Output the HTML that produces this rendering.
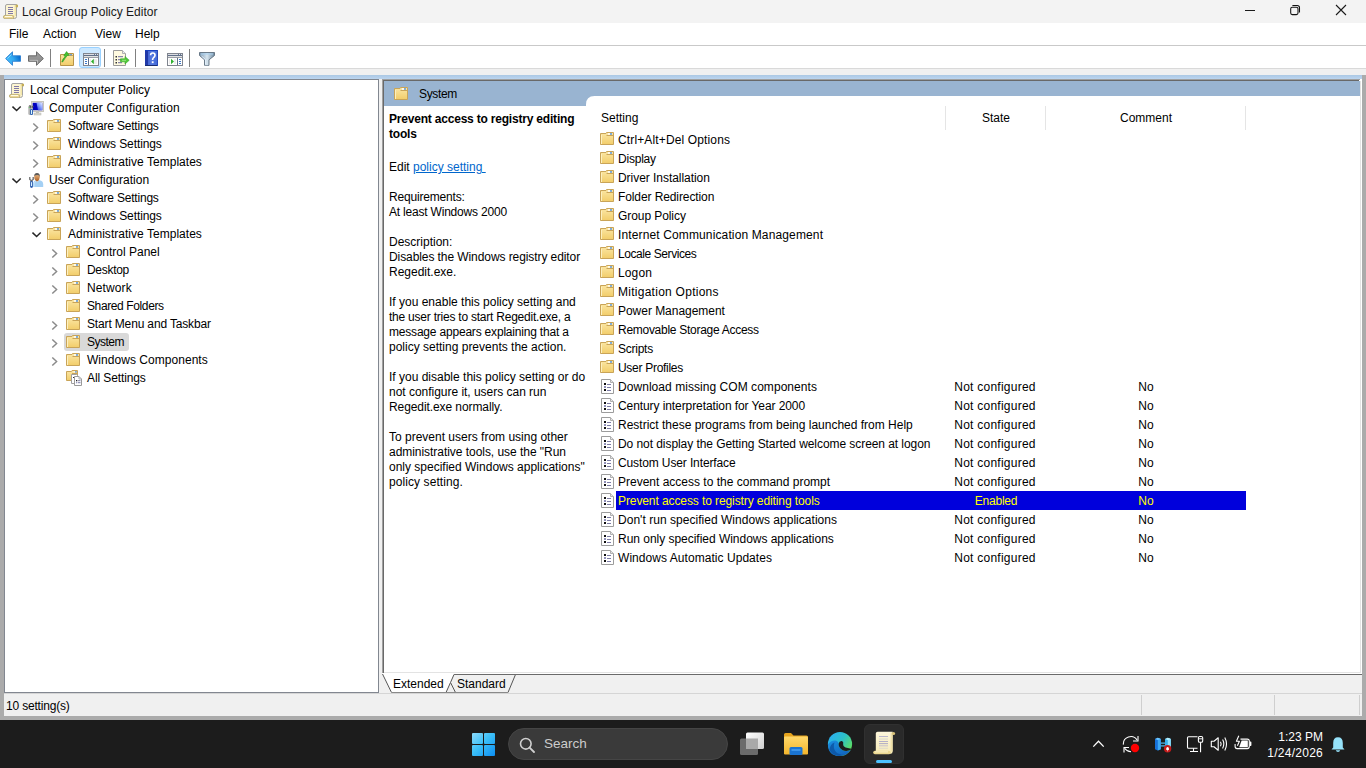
<!DOCTYPE html>
<html><head><meta charset="utf-8"><title>Local Group Policy Editor</title>
<style>
html,body{margin:0;padding:0;width:1366px;height:768px;overflow:hidden;background:#fff}
body{position:relative;font-family:'Liberation Sans', sans-serif}
body>div{position:absolute;box-sizing:content-box}
.t{white-space:pre;line-height:16px;font-family:'Liberation Sans', sans-serif}
svg{overflow:visible}
</style></head><body>
<svg width="0" height="0" style="position:absolute"><defs><linearGradient id="gFold" x1="0" y1="0" x2="0" y2="1"><stop offset="0" stop-color="#fbe7a6"/><stop offset="1" stop-color="#f2cd6a"/></linearGradient>
<symbol id="folder" viewBox="0 0 14 13">
 <path d="M0.5 1.5H6L6.5 0.5H13.5V12.5H0.5Z" fill="url(#gFold)" stroke="#c9a458"/>
 <path d="M6.5 3.5H13" stroke="#c9a458"/>
 <rect x="8" y="1.2" width="2" height="1.5" fill="#fff"/>
 <rect x="10" y="1.2" width="2" height="1.5" fill="#5b9be8"/>
 <path d="M1.5 3v9" stroke="#fdf0c0"/>
</symbol>
<symbol id="page" viewBox="0 0 13 15">
 <path d="M0.5 0.5H9.5L12.5 3.5V14.5H0.5Z" fill="#fff" stroke="#9c9c9c"/>
 <path d="M9.5 0.5V3.5H12.5" fill="#e6e6e6" stroke="#b0b0b0"/>
 <rect x="3" y="4" width="2" height="2" fill="#111"/>
 <rect x="3" y="7" width="2" height="2" fill="#8f8fb8"/>
 <rect x="3" y="10" width="2" height="2" fill="#111"/>
 <rect x="6" y="5" width="4" height="1" fill="#7c7ca6"/>
 <rect x="6" y="8" width="4" height="1" fill="#7c7ca6"/>
 <rect x="6" y="11" width="4" height="1" fill="#7c7ca6"/>
</symbol>
<symbol id="scroll" viewBox="0 0 16 16">
 <path d="M3.5 12.5V3Q3.5 1.5 5 1.5H14.5V13.5Q14.5 15.5 12.5 15.5H11" fill="#fdf5d2" stroke="#a4a4a4"/>
 <rect x="12.5" y="2" width="1.5" height="11" fill="#f3e6a8"/>
 <circle cx="15" cy="3" r="1.4" fill="#c4ac58"/>
 <rect x="6" y="4" width="5" height="1" fill="#8078a8"/>
 <rect x="6" y="6" width="5" height="1" fill="#8078a8"/>
 <rect x="6" y="8" width="5" height="1" fill="#8078a8"/>
 <rect x="6" y="10" width="5" height="1" fill="#8078a8"/>
 <rect x="1.4" y="12.4" width="10.5" height="3.2" rx="1.6" fill="#eed894" stroke="#b6a66a" stroke-width="0.8"/>
 <rect x="3" y="13" width="7" height="1" fill="#fffbe6"/>
</symbol>
<symbol id="scroll_big" viewBox="0 0 24 24">
 <linearGradient id="gPap" x1="0" y1="0" x2="0" y2="1"><stop offset="0" stop-color="#fdf6dc"/><stop offset="1" stop-color="#f6eab8"/></linearGradient>
 <path d="M3.8 21V2.6Q3.8 0.8 5.6 0.8H20.6V20.5Q20.6 22.8 18.6 22.8" fill="url(#gPap)"/>
 <rect x="18.6" y="1.5" width="2" height="19" fill="#efe0a8"/>
 <circle cx="21.6" cy="2.6" r="1.5" fill="#dcc478"/>
 <rect x="7" y="5" width="9" height="0.9" fill="#b4b0cc"/>
 <rect x="7" y="7.6" width="9" height="0.9" fill="#d8d4d0"/>
 <rect x="7" y="10" width="9" height="0.9" fill="#aca8c8"/>
 <rect x="7" y="12.2" width="9" height="0.9" fill="#a8a4c4"/>
 <rect x="7" y="14.4" width="9" height="0.9" fill="#c0bcd0"/>
 <rect x="7" y="16.8" width="9" height="0.9" fill="#dcd8cc"/>
 <rect x="1.2" y="19.8" width="17.6" height="3.4" rx="1.7" fill="#ecd890"/>
 <rect x="3" y="20.4" width="13" height="1" fill="#fbf2cc"/>
</symbol>
<linearGradient id="gScr" x1="0" y1="1" x2="1" y2="0"><stop offset="0" stop-color="#2030e0"/><stop offset="0.6" stop-color="#90a8ff"/><stop offset="1" stop-color="#e8f0ff"/></linearGradient>
<symbol id="computer" viewBox="0 0 16 16">
 <rect x="3.5" y="1.5" width="12" height="10" fill="#e8e6dc" stroke="#c8c6bc"/>
 <rect x="4.7" y="2.8" width="9.6" height="7.4" fill="#0000c0"/>
 <path d="M8.5 2.8H14.3V10.2H10Z" fill="url(#gScr)"/>
 <rect x="8" y="11.5" width="3" height="1.6" fill="#c4c4bc"/>
 <rect x="6" y="13" width="7" height="2" fill="#d8d8d0" stroke="#b8b8b0" stroke-width="0.5"/>
 <rect x="0.3" y="5.2" width="4.5" height="9.8" rx="1.5" fill="#b4b4b4"/>
 <rect x="2" y="9" width="3" height="6" rx="1.3" fill="#3568b8"/>
 <rect x="3" y="10" width="1" height="4" fill="#d8f4ff"/>
 <path d="M1.6 5.4L3.4 8.2L5.3 5.8" stroke="#5a5a5a" stroke-width="1.3" fill="none"/>
 <rect x="3" y="7.6" width="1" height="1" fill="#fff"/>
 <rect x="0.8" y="7" width="1" height="1" fill="#60c060"/>
</symbol>
<linearGradient id="gFace" x1="0" y1="0" x2="0" y2="1"><stop offset="0" stop-color="#f2c08a"/><stop offset="1" stop-color="#a85a20"/></linearGradient>
<symbol id="user" viewBox="0 0 16 16">
 <path d="M5.2 15V11.8Q5.2 8.2 9 8.2H11.5Q15.2 8.8 15.2 12.2V15Z" fill="#a4d0f4"/>
 <path d="M6.2 15V12Q6.2 9.5 8.5 9.2" fill="none" stroke="#c8e6fc" stroke-width="0.8"/>
 <path d="M8.8 8.4L9.6 10.3L10.6 8.4Z" fill="#fff"/>
 <path d="M6.2 5Q6.2 1.5 9 1.5Q11.8 1.5 11.8 5Q11.8 8 9.2 9.5Q6.2 8 6.2 5Z" fill="url(#gFace)"/>
 <path d="M6.1 4.5Q6.1 1 9 1Q12 1 11.9 5.2L11.2 3.4Q9.5 2.6 6.8 3.4Z" fill="#5a5a5a"/>
 <path d="M3.5 9.8L3.5 14.5" stroke="#2f5fb0" stroke-width="2.8" stroke-linecap="round"/>
 <rect x="3" y="10.2" width="1" height="3.8" fill="#d8f4ff"/>
 <path d="M1.8 5V7.5L3.5 8.8L5.2 7.5V5" stroke="#6a6a6a" stroke-width="1.3" fill="none"/>
</symbol>
<symbol id="allset" viewBox="0 0 16 16">
 <path d="M0.5 1.5H5.5L6 0.5H11.5V10.5H0.5Z" fill="url(#gFold)" stroke="#c9a458"/>
 <path d="M6 3.5H11" stroke="#c9a458"/>
 <rect x="7.5" y="1.3" width="1.5" height="1.2" fill="#fff"/>
 <rect x="9" y="1.3" width="1.8" height="1.2" fill="#4a8ee0"/>
 <path d="M5.5 4.5H10.5L11.5 5.5V13.5H5.5Z" fill="#fff" stroke="#a0a0a0"/>
 <rect x="7" y="7" width="1" height="1" fill="#333"/>
 <path d="M8.5 6.5H13L15.5 9V15.5H8.5Z" fill="#fff" stroke="#9a9a9a"/>
 <path d="M13 6.5V9H15.5" fill="none" stroke="#b0b0b0"/>
 <rect x="10" y="10" width="1.3" height="1.3" fill="#222"/>
 <rect x="10" y="12" width="1.3" height="1.3" fill="#9a9ac0"/>
 <rect x="12" y="10.2" width="2.5" height="1" fill="#7c7ca6"/>
 <rect x="12" y="12.2" width="2.5" height="1" fill="#7c7ca6"/>
</symbol>
<symbol id="chev_r" viewBox="0 0 8 9">
 <path d="M1.3 0.5L5.6 4.5L1.3 8.5" fill="none" stroke="#8a8a8a" stroke-width="1.45"/>
</symbol>
<symbol id="chev_d" viewBox="0 0 10 7">
 <path d="M0.5 0.6L4.6 4.6L8.7 0.6" fill="none" stroke="#262626" stroke-width="1.45"/>
</symbol>
<linearGradient id="gBack" x1="0" y1="0.7" x2="1" y2="0.3"><stop offset="0" stop-color="#48c0ff"/><stop offset="0.5" stop-color="#30a8f0"/><stop offset="1" stop-color="#0060c8"/></linearGradient>
<symbol id="tb_back" viewBox="0 0 16 16">
 <path d="M0.6 7.5L7.5 0.8V4.8H15.5V10.3H7.5V14.3Z" fill="url(#gBack)" stroke="#2e7fd0" stroke-width="0.9"/>
 <path d="M2.5 7.5L6.5 3.5" stroke="#a8e4ff" stroke-width="0.7"/>
</symbol>
<linearGradient id="gFwd" x1="0" y1="0" x2="0" y2="1"><stop offset="0" stop-color="#a0a0a0"/><stop offset="1" stop-color="#888888"/></linearGradient>
<symbol id="tb_fwd" viewBox="0 0 16 16">
 <path d="M15.4 7.5L8.5 0.8V4.8H0.5V10.3H8.5V14.3Z" fill="url(#gFwd)" stroke="#606060" stroke-width="0.9"/>
 <path d="M1.5 9.3H9.5V12.5" stroke="#d8d8d8" stroke-width="0.6" fill="none"/>
</symbol>
<symbol id="tb_up" viewBox="0 0 16 16">
 <path d="M1.5 4.5H6.5L7 3.5H14.5V15.5H1.5Z" fill="url(#gFold)" stroke="#b89448"/>
 <path d="M7 5.5H14" stroke="#c9a458"/>
 <rect x="10.5" y="4.2" width="2.5" height="1.1" fill="#4a8ee0"/>
 <path d="M2.8 12Q3.8 8.5 6.2 6.6L4.8 5.6L7.6 1.6L10.2 5.2L8.2 5.6Q6.2 8 3.6 12Z" fill="#45c030" stroke="#2a9a20" stroke-width="0.6"/>
</symbol>
<symbol id="tb_tree" viewBox="0 0 16 13">
 <rect x="0" y="0" width="16" height="13" fill="#80858f"/>
 <rect x="1" y="1" width="10" height="1" fill="#dcdde2"/>
 <rect x="11" y="1" width="4" height="1" fill="#6b7a92"/>
 <rect x="12" y="1" width="1" height="1" fill="#e0e4ea"/>
 <rect x="14" y="1" width="1" height="1" fill="#e0e4ea"/>
 <rect x="1" y="2" width="14" height="1" fill="#5f6f88"/>
 <rect x="1" y="3" width="14" height="1" fill="#e2e2e2"/>
 <rect x="1" y="4" width="14" height="1" fill="#9a9ea6"/>
 <rect x="1" y="5" width="4" height="7" fill="#fff"/>
 <rect x="5" y="5" width="1" height="7" fill="#5f6f88"/>
 <rect x="6" y="5" width="9" height="7" fill="#fff"/>
 <rect x="7" y="6" width="1" height="5" fill="#ececec"/>
 <rect x="11" y="6" width="3" height="5" fill="#ececec"/>
 <rect x="2" y="6" width="2" height="1" fill="#3b78c8"/>
 <rect x="2" y="8" width="2" height="1" fill="#3b78c8"/>
 <rect x="2" y="10" width="2" height="1" fill="#3b78c8"/>
 <path d="M10.8 5.8V11.2L8 8.5Z" fill="#30b030"/>
</symbol>
<symbol id="tb_export" viewBox="0 0 17 16">
 <path d="M0.5 0.5H9.5L12.5 3.5V15.5H0.5Z" fill="#fffae0" stroke="#9a9a9a"/>
 <path d="M9.5 0.5V3.5H12.5" fill="#eee" stroke="#b0b0b0"/>
 <rect x="2.5" y="6" width="1.5" height="1.5" fill="#333"/><rect x="2.5" y="9" width="1.5" height="1.5" fill="#333"/><rect x="2.5" y="12" width="1.5" height="1.5" fill="#333"/>
 <rect x="5" y="6.2" width="5" height="1" fill="#6a6aa0"/><rect x="5" y="9.2" width="4" height="1" fill="#6a6aa0"/><rect x="5" y="12.2" width="4" height="1" fill="#6a6aa0"/>
 <path d="M7.5 8.8H12V6.5L16.2 10.3L12 14V11.8H7.5Z" fill="#50c838" stroke="#38a828" stroke-width="0.6"/>
 <path d="M9 10.3H13" stroke="#a8f090" stroke-width="0.8"/>
</symbol>
<linearGradient id="gHelp" x1="0" y1="0" x2="1" y2="0"><stop offset="0" stop-color="#3a58c8"/><stop offset="0.5" stop-color="#5478e0"/><stop offset="1" stop-color="#4068d8"/></linearGradient>
<symbol id="tb_help" viewBox="0 0 13 16">
 <rect x="0" y="0" width="13" height="16" fill="url(#gHelp)"/>
 <rect x="0" y="0" width="3" height="16" fill="#2038a8"/>
 <rect x="0" y="0" width="13" height="1" fill="#1840c0"/>
 <rect x="0" y="15" width="13" height="1" fill="#182c70"/>
 <rect x="12" y="0" width="1" height="16" fill="#2848b8"/>
 <path d="M5.6 5.2Q5.6 3 7.8 3Q10 3 10 5.2Q10 6.8 8.4 7.8Q7.6 8.4 7.6 10" fill="none" stroke="#fff" stroke-width="1.6"/>
 <rect x="6.8" y="11.3" width="1.8" height="1.8" fill="#fff"/>
</symbol>
<symbol id="tb_action" viewBox="0 0 16 13">
 <rect x="0" y="0" width="16" height="13" fill="#80858f"/>
 <rect x="1" y="1" width="10" height="1" fill="#dcdde2"/>
 <rect x="11" y="1" width="4" height="1" fill="#6b7a92"/>
 <rect x="12" y="1" width="1" height="1" fill="#e0e4ea"/>
 <rect x="14" y="1" width="1" height="1" fill="#e0e4ea"/>
 <rect x="1" y="2" width="14" height="1" fill="#5f6f88"/>
 <rect x="1" y="3" width="14" height="1" fill="#e2e2e2"/>
 <rect x="1" y="4" width="14" height="1" fill="#9a9ea6"/>
 <rect x="1" y="5" width="9" height="7" fill="#fff"/>
 <rect x="10" y="5" width="1" height="7" fill="#5f6f88"/>
 <rect x="11" y="5" width="4" height="7" fill="#fff"/>
 <rect x="2" y="6" width="1" height="5" fill="#ececec"/>
 <rect x="7" y="6" width="2" height="5" fill="#ececec"/>
 <rect x="12" y="6" width="2" height="1" fill="#3b78c8"/>
 <rect x="12" y="8" width="2" height="1" fill="#3b78c8"/>
 <rect x="12" y="10" width="2" height="1" fill="#3b78c8"/>
 <path d="M4 5.8V11.2L7 8.5Z" fill="#30b030"/>
</symbol>
<linearGradient id="gFil" x1="0" y1="0" x2="1" y2="0"><stop offset="0" stop-color="#7c98b0"/><stop offset="0.5" stop-color="#d8e6f0"/><stop offset="1" stop-color="#6c889e"/></linearGradient>
<symbol id="tb_filter" viewBox="0 0 16 14">
 <path d="M0.5 0.5H15.5V3.5L10 7.8V13Q10 13.8 9 13.8H6.5Q5.5 13.8 5.5 13V7.8L0.5 3.5Z" fill="url(#gFil)" stroke="#5e6e7e" stroke-width="0.9"/>
 <rect x="2" y="1.5" width="12" height="1" fill="#a8d0f0"/>
 <path d="M2.5 4L6.5 7.5V12.5" stroke="#e8f4ff" stroke-width="0.8" fill="none"/>
</symbol>
<linearGradient id="gWin" gradientUnits="userSpaceOnUse" x1="0" y1="0" x2="23" y2="23"><stop offset="0" stop-color="#8cdafb"/><stop offset="0.45" stop-color="#3cc0f8"/><stop offset="1" stop-color="#0c8ef2"/></linearGradient>
<symbol id="winlogo" viewBox="0 0 23 23">
 <rect x="0" y="0" width="11" height="11" rx="1" fill="url(#gWin)"/>
 <rect x="12" y="0" width="11" height="11" rx="1" fill="url(#gWin)"/>
 <rect x="0" y="12" width="11" height="11" rx="1" fill="url(#gWin)"/>
 <rect x="12" y="12" width="11" height="11" rx="1" fill="url(#gWin)"/>
</symbol>
<symbol id="tk_search" viewBox="0 0 16 16">
 <circle cx="6.8" cy="6.8" r="5.3" fill="none" stroke="#d0d0d0" stroke-width="1.6"/>
 <path d="M10.6 10.6L15 15" stroke="#d0d0d0" stroke-width="1.8" stroke-linecap="round"/>
</symbol>
<linearGradient id="gTv" x1="0" y1="0" x2="1" y2="1"><stop offset="0" stop-color="#ffffff"/><stop offset="1" stop-color="#cfcfcf"/></linearGradient>
<symbol id="tk_taskview" viewBox="0 0 26 24">
 <rect x="1" y="6.5" width="18" height="16.5" rx="1.5" fill="#6b6b6b"/>
 <rect x="7" y="0.5" width="18" height="16.5" rx="1.5" fill="url(#gTv)"/>
 <rect x="7" y="6.5" width="12" height="10.5" fill="#a9a9a9"/>
</symbol>
<linearGradient id="gExp" x1="0" y1="0" x2="0" y2="1"><stop offset="0" stop-color="#ffd86a"/><stop offset="1" stop-color="#f3b52c"/></linearGradient>
<symbol id="tk_explorer" viewBox="0 0 26 24">
 <path d="M1 2.5Q1 1 2.5 1H8L10.5 3.5H23.5Q25 3.5 25 5V22H1Z" fill="#e6a31c"/>
 <rect x="1" y="4.5" width="24" height="18" rx="1" fill="url(#gExp)"/>
 <rect x="6.5" y="15" width="13" height="8" rx="1.5" fill="#1a74d2"/>
 <rect x="8.5" y="17" width="9" height="2" fill="#3d95ea"/>
</symbol>
<linearGradient id="gEdge1" x1="0.1" y1="0.1" x2="0.95" y2="0.7"><stop offset="0" stop-color="#2ab0f0"/><stop offset="0.5" stop-color="#2cc0c8"/><stop offset="1" stop-color="#5ee060"/></linearGradient>
<linearGradient id="gEdge2" x1="0" y1="0" x2="0.6" y2="1"><stop offset="0" stop-color="#1a90e0"/><stop offset="1" stop-color="#1266c0"/></linearGradient>
<symbol id="tk_edge" viewBox="0 0 26 26">
 <circle cx="13" cy="13" r="12.1" fill="url(#gEdge1)"/>
 <path d="M0.9 13.5Q1.2 25 13 25.1Q20 25 23.8 18.8Q19.5 20.8 15.8 19.2Q11.6 17.2 11.6 13.2Q11.6 9.8 8.5 9.4Q3.5 9.2 0.9 13.5Z" fill="url(#gEdge2)"/>
 <path d="M2.5 19Q3 13 7.5 11.5Q5.5 17 9 21Q12 24 17.5 23.8Q14 25.3 10 24.6Q5 23.5 2.5 19Z" fill="#0b4f9c" opacity="0.75"/>
 <path d="M11.6 12.8Q12.2 9.9 14.8 10.1Q16.8 10.5 16.2 12.8Q15.8 15.3 18.6 16.6Q21.2 17.6 24 17.4L23.8 18.8Q19.5 20.8 15.8 19.2Q11.6 17.2 11.6 12.8Z" fill="#1c1c1c"/>
</symbol>
<symbol id="tk_chev" viewBox="0 0 13 9">
 <path d="M1.3 7.6L6.5 2.3L11.7 7.6" fill="none" stroke="#fff" stroke-width="1.3"/>
</symbol>
<symbol id="tk_sync" viewBox="0 0 20 19">
 <path d="M2.4 9.6A7.4 7.4 0 0 1 16 5" fill="none" stroke="#fff" stroke-width="1.1"/>
 <path d="M17 1V6H12" fill="none" stroke="#fff" stroke-width="1.1"/>
 <path d="M3.6 13.2Q6 16.6 10 16.8" fill="none" stroke="#fff" stroke-width="1.1"/>
 <path d="M3 17.5V12.5H8" fill="none" stroke="#fff" stroke-width="1.1"/>
 <circle cx="14" cy="13" r="4.2" fill="#ff0000"/>
</symbol>
<linearGradient id="gNet" x1="0" y1="0" x2="1" y2="0"><stop offset="0" stop-color="#2e8fe6"/><stop offset="1" stop-color="#8ad8f8"/></linearGradient>
<symbol id="tk_net" viewBox="0 0 18 16">
 <path d="M1 2L3.8 0.8L6.8 2V12.2L3.8 13.4L1 12.2Z" fill="#1670d8"/>
 <path d="M3.8 0.8L6.8 2V12.2L3.8 13.4Z" fill="#3ea8f4"/>
 <path d="M1 2L3.8 0.8L6.8 2L3.8 3Z" fill="#70c8ff"/>
 <path d="M11 2L13.8 0.8L16.8 2V12.2L13.8 13.4L11 12.2Z" fill="#3cb0ec"/>
 <path d="M13.8 0.8L16.8 2V12.2L13.8 13.4Z" fill="#8ee0fc"/>
 <path d="M11 2L13.8 0.8L16.8 2L13.8 3Z" fill="#b8f0ff"/>
 <rect x="6.8" y="5.5" width="4.2" height="1.2" fill="#50b8f0"/>
 <rect x="6.8" y="8.3" width="4.2" height="1.2" fill="#50b8f0"/>
 <circle cx="13.6" cy="11.8" r="3.7" fill="#c41a1a"/>
 <path d="M12.3 13.1V11.6Q12.3 10.1 13.6 10.1Q14.9 10.1 14.9 11.6V13.1Z" fill="#fff"/>
 <rect x="13.1" y="13.4" width="1" height="0.8" fill="#fff"/>
</symbol>
<symbol id="tk_mon" viewBox="0 0 18 18">
 <path d="M11.5 1.8H2.5Q1.5 1.8 1.5 2.8V12.2Q1.5 13.2 2.5 13.2H11.5" fill="none" stroke="#fff" stroke-width="1.1"/>
 <path d="M4 16.5H12M7.5 13.2V16.5" stroke="#fff" stroke-width="1.1"/>
 <rect x="12.4" y="1.5" width="4.3" height="5.8" rx="1.3" fill="none" stroke="#fff" stroke-width="1.1"/>
 <path d="M12.6 3.8H16.5" stroke="#fff" stroke-width="0.9"/>
 <path d="M14.55 7.3V17.2" stroke="#fff" stroke-width="1.1"/>
</symbol>
<symbol id="tk_vol" viewBox="0 0 18 16">
 <path d="M1.3 5.2H4L8.2 1.8V14.2L4 10.8H1.3Z" fill="none" stroke="#fff" stroke-width="1.1" stroke-linejoin="round"/>
 <path d="M10.5 5.8Q11.8 8 10.5 10.2" fill="none" stroke="#fff" stroke-width="1.1"/>
 <path d="M12.6 3.6Q15 8 12.6 12.4" fill="none" stroke="#fff" stroke-width="1.1"/>
 <path d="M14.8 1.5Q18.2 8 14.8 14.5" fill="none" stroke="#fff" stroke-width="1.1"/>
</symbol>
<symbol id="tk_bat" viewBox="0 0 18 16">
 <path d="M6.5 4.1H13.3Q15.3 4.1 15.3 6.1V11.6Q15.3 13.6 13.3 13.6H3.1Q1.1 13.6 1.1 11.6V9" fill="none" stroke="#fff" stroke-width="1.1"/>
 <path d="M15.8 6.6H16.6Q17.4 6.6 17.4 7.4V10.3Q17.4 11.1 16.6 11.1H15.8Z" fill="#fff"/>
 <path d="M4.8 0.8L2.4 6.2H5.4L3.4 10.8" fill="none" stroke="#fff" stroke-width="1.1" stroke-linejoin="round"/>
 <path d="M5.2 12.3L7.6 5.6H13.8V12.3Z" fill="#fff"/>
</symbol>
<symbol id="tk_bell" viewBox="0 0 16 17">
 <path d="M3.2 11.5V7Q3.2 1.2 8 1.2Q12.8 1.2 12.8 7V11.5L14.5 13.5H1.5Z" fill="#96e2fa"/>
 <path d="M5.8 14.2H10.2Q9.8 16 8 16Q6.2 16 5.8 14.2Z" fill="#96e2fa"/>
</symbol>
</defs></svg>
<div style="left:0px;top:0px;width:1366px;height:23px;background:#f3f3f3;"></div>
<svg style="position:absolute;left:2px;top:3px" width="16" height="16"><use href="#scroll"/></svg>
<div class="t" style="left:22px;top:4px;font-size:12px;color:#1a1a1a;">Local Group Policy Editor</div>
<svg style="position:absolute;left:1240px;top:0px" width="126" height="23" viewBox="0 0 126 23"><line x1="5" y1="10.5" x2="15" y2="10.5" stroke="#1a1a1a" stroke-width="1"/><rect x="50.7" y="7.2" width="7.3" height="7.4" rx="1.6" fill="none" stroke="#111" stroke-width="1.05"/><path d="M52.4 5.4H57.2A2.3 2.3 0 0 1 59.5 7.7V12.6" fill="none" stroke="#111" stroke-width="1.05"/><path d="M96 5L106 15M106 5L96 15" stroke="#1a1a1a" stroke-width="1.1"/></svg>
<div style="left:0px;top:23px;width:1366px;height:22px;background:#ffffff;"></div>
<div style="left:0px;top:45px;width:1366px;height:1px;background:#c9c9c9;"></div>
<div class="t" style="left:9px;top:26px;font-size:12px;color:#000;">File</div>
<div class="t" style="left:43px;top:26px;font-size:12px;color:#000;">Action</div>
<div class="t" style="left:95px;top:26px;font-size:12px;color:#000;">View</div>
<div class="t" style="left:135px;top:26px;font-size:12px;color:#000;">Help</div>
<div style="left:0px;top:46px;width:1366px;height:22px;background:#ffffff;"></div>
<div style="left:0px;top:68px;width:1366px;height:1px;background:#d9d9d9;"></div>
<div style="left:0px;top:69px;width:1366px;height:6px;background:#f0f0f0;"></div>
<div style="left:79px;top:47px;width:20px;height:19px;background:#cce8ff;border:1px solid #99d1ff;border-radius:3px"></div>
<div style="left:50px;top:49px;width:1px;height:18px;background:#808080;"></div>
<div style="left:104px;top:49px;width:1px;height:18px;background:#808080;"></div>
<div style="left:135px;top:49px;width:1px;height:18px;background:#808080;"></div>
<div style="left:189px;top:49px;width:1px;height:18px;background:#808080;"></div>
<svg style="position:absolute;left:5px;top:51px" width="16" height="16"><use href="#tb_back"/></svg>
<svg style="position:absolute;left:28px;top:51px" width="16" height="16"><use href="#tb_fwd"/></svg>
<svg style="position:absolute;left:59px;top:50px" width="16" height="16"><use href="#tb_up"/></svg>
<svg style="position:absolute;left:83px;top:53px" width="16" height="13"><use href="#tb_tree"/></svg>
<svg style="position:absolute;left:113px;top:50px" width="17" height="16"><use href="#tb_export"/></svg>
<svg style="position:absolute;left:145px;top:50px" width="13" height="16"><use href="#tb_help"/></svg>
<svg style="position:absolute;left:167px;top:53px" width="16" height="13"><use href="#tb_action"/></svg>
<svg style="position:absolute;left:199px;top:52px" width="16" height="14"><use href="#tb_filter"/></svg>
<div style="left:0px;top:75px;width:4px;height:645px;background:#ababab;"></div>
<div style="left:1362px;top:75px;width:4px;height:645px;background:#ababab;"></div>
<div style="left:0px;top:716px;width:1366px;height:4px;background:#ababab;"></div>
<div style="left:4px;top:75px;width:1358px;height:4px;background:linear-gradient(#abc8e4,#bcd5ef);"></div>
<div style="left:4px;top:79px;width:373px;height:612px;background:#fff;border:1px solid #828790"></div>
<div style="left:379px;top:79px;width:3px;height:614px;background:#f0f0f0;"></div>
<div style="left:64px;top:333px;width:65px;height:18px;background:#d9d9d9;border-radius:3px"></div>
<svg style="position:absolute;left:8px;top:82px" width="16" height="16"><use href="#scroll"/></svg>
<div class="t" style="left:30px;top:82px;font-size:12px;color:#000;">Local Computer Policy</div>
<svg style="position:absolute;left:12px;top:106px" width="10" height="7"><use href="#chev_d"/></svg>
<svg style="position:absolute;left:28px;top:100px" width="16" height="16"><use href="#computer"/></svg>
<div class="t" style="left:49px;top:100px;font-size:12px;color:#000;letter-spacing:0.157px;">Computer Configuration</div>
<svg style="position:absolute;left:32px;top:123px" width="8" height="9"><use href="#chev_r"/></svg>
<svg style="position:absolute;left:47px;top:119px" width="14" height="13"><use href="#folder"/></svg>
<div class="t" style="left:68px;top:118px;font-size:12px;color:#000;letter-spacing:-0.200px;">Software Settings</div>
<svg style="position:absolute;left:32px;top:141px" width="8" height="9"><use href="#chev_r"/></svg>
<svg style="position:absolute;left:47px;top:137px" width="14" height="13"><use href="#folder"/></svg>
<div class="t" style="left:68px;top:136px;font-size:12px;color:#000;letter-spacing:-0.100px;">Windows Settings</div>
<svg style="position:absolute;left:32px;top:159px" width="8" height="9"><use href="#chev_r"/></svg>
<svg style="position:absolute;left:47px;top:155px" width="14" height="13"><use href="#folder"/></svg>
<div class="t" style="left:68px;top:154px;font-size:12px;color:#000;letter-spacing:0.030px;">Administrative Templates</div>
<svg style="position:absolute;left:12px;top:178px" width="10" height="7"><use href="#chev_d"/></svg>
<svg style="position:absolute;left:28px;top:172px" width="16" height="16"><use href="#user"/></svg>
<div class="t" style="left:49px;top:172px;font-size:12px;color:#000;">User Configuration</div>
<svg style="position:absolute;left:32px;top:195px" width="8" height="9"><use href="#chev_r"/></svg>
<svg style="position:absolute;left:47px;top:191px" width="14" height="13"><use href="#folder"/></svg>
<div class="t" style="left:68px;top:190px;font-size:12px;color:#000;letter-spacing:-0.200px;">Software Settings</div>
<svg style="position:absolute;left:32px;top:213px" width="8" height="9"><use href="#chev_r"/></svg>
<svg style="position:absolute;left:47px;top:209px" width="14" height="13"><use href="#folder"/></svg>
<div class="t" style="left:68px;top:208px;font-size:12px;color:#000;letter-spacing:-0.100px;">Windows Settings</div>
<svg style="position:absolute;left:32px;top:232px" width="10" height="7"><use href="#chev_d"/></svg>
<svg style="position:absolute;left:47px;top:227px" width="14" height="13"><use href="#folder"/></svg>
<div class="t" style="left:68px;top:226px;font-size:12px;color:#000;letter-spacing:0.030px;">Administrative Templates</div>
<svg style="position:absolute;left:51px;top:249px" width="8" height="9"><use href="#chev_r"/></svg>
<svg style="position:absolute;left:66px;top:245px" width="14" height="13"><use href="#folder"/></svg>
<div class="t" style="left:87px;top:244px;font-size:12px;color:#000;">Control Panel</div>
<svg style="position:absolute;left:51px;top:267px" width="8" height="9"><use href="#chev_r"/></svg>
<svg style="position:absolute;left:66px;top:263px" width="14" height="13"><use href="#folder"/></svg>
<div class="t" style="left:87px;top:262px;font-size:12px;color:#000;letter-spacing:-0.300px;">Desktop</div>
<svg style="position:absolute;left:51px;top:285px" width="8" height="9"><use href="#chev_r"/></svg>
<svg style="position:absolute;left:66px;top:281px" width="14" height="13"><use href="#folder"/></svg>
<div class="t" style="left:87px;top:280px;font-size:12px;color:#000;letter-spacing:0.117px;">Network</div>
<svg style="position:absolute;left:66px;top:299px" width="14" height="13"><use href="#folder"/></svg>
<div class="t" style="left:87px;top:298px;font-size:12px;color:#000;letter-spacing:-0.385px;">Shared Folders</div>
<svg style="position:absolute;left:51px;top:321px" width="8" height="9"><use href="#chev_r"/></svg>
<svg style="position:absolute;left:66px;top:317px" width="14" height="13"><use href="#folder"/></svg>
<div class="t" style="left:87px;top:316px;font-size:12px;color:#000;letter-spacing:-0.152px;">Start Menu and Taskbar</div>
<svg style="position:absolute;left:51px;top:339px" width="8" height="9"><use href="#chev_r"/></svg>
<svg style="position:absolute;left:66px;top:335px" width="14" height="13"><use href="#folder"/></svg>
<div class="t" style="left:87px;top:334px;font-size:12px;color:#000;letter-spacing:-0.520px;">System</div>
<svg style="position:absolute;left:51px;top:357px" width="8" height="9"><use href="#chev_r"/></svg>
<svg style="position:absolute;left:66px;top:353px" width="14" height="13"><use href="#folder"/></svg>
<div class="t" style="left:87px;top:352px;font-size:12px;color:#000;letter-spacing:0.041px;">Windows Components</div>
<svg style="position:absolute;left:66px;top:370px" width="16" height="16"><use href="#allset"/></svg>
<div class="t" style="left:87px;top:370px;font-size:12px;color:#000;letter-spacing:-0.109px;">All Settings</div>
<div style="left:382px;top:79px;width:980px;height:614px;background:#ffffff;"></div>
<div style="left:382px;top:79px;width:978px;height:1px;background:#a0a0a0;"></div>
<div style="left:382px;top:80px;width:977px;height:1px;background:#696969;"></div>
<div style="left:382px;top:79px;width:1px;height:594px;background:#a0a0a0;"></div>
<div style="left:383px;top:80px;width:1px;height:593px;background:#696969;"></div>
<div style="left:1361px;top:79px;width:1px;height:594px;background:#ffffff;"></div>
<div style="left:384px;top:81px;width:976px;height:15px;background:#99b4d1;"></div>
<svg style="position:absolute;left:384px;top:96px" width="212" height="10" viewBox="0 0 212 10"><path d="M0 0H210.5Q202 0 202 8.5V10H0Z" fill="#99b4d1"/></svg>
<svg style="position:absolute;left:394px;top:87px" width="14" height="13"><use href="#folder"/></svg>
<div class="t" style="left:419px;top:86px;font-size:12px;color:#000;letter-spacing:-0.35px">System</div>
<div class="t" style="left:389px;top:111px;font-size:12px;color:#000;font-weight:bold;letter-spacing:-0.2px">Prevent access to registry editing</div>
<div class="t" style="left:389px;top:126px;font-size:12px;color:#000;font-weight:bold;letter-spacing:-0.2px">tools</div>
<div class="t" style="left:389px;top:159px;font-size:12px">Edit <span style="color:#0066cc;text-decoration:underline">policy setting </span></div>
<div class="t" style="left:389px;top:189px;font-size:12px;color:#000;letter-spacing:-0.183px;">Requirements:</div>
<div class="t" style="left:389px;top:204px;font-size:12px;color:#000;letter-spacing:-0.200px;">At least Windows 2000</div>
<div class="t" style="left:389px;top:234px;font-size:12px;color:#000;">Description:</div>
<div class="t" style="left:389px;top:249px;font-size:12px;color:#000;letter-spacing:-0.083px;">Disables the Windows registry editor</div>
<div class="t" style="left:389px;top:264px;font-size:12px;color:#000;">Regedit.exe.</div>
<div class="t" style="left:389px;top:294px;font-size:12px;color:#000;">If you enable this policy setting and</div>
<div class="t" style="left:389px;top:309px;font-size:12px;color:#000;letter-spacing:-0.227px;">the user tries to start Regedit.exe, a</div>
<div class="t" style="left:389px;top:324px;font-size:12px;color:#000;letter-spacing:-0.194px;">message appears explaining that a</div>
<div class="t" style="left:389px;top:339px;font-size:12px;color:#000;">policy setting prevents the action.</div>
<div class="t" style="left:389px;top:369px;font-size:12px;color:#000;">If you disable this policy setting or do</div>
<div class="t" style="left:389px;top:384px;font-size:12px;color:#000;letter-spacing:-0.023px;">not configure it, users can run</div>
<div class="t" style="left:389px;top:399px;font-size:12px;color:#000;letter-spacing:-0.085px;">Regedit.exe normally.</div>
<div class="t" style="left:389px;top:429px;font-size:12px;color:#000;">To prevent users from using other</div>
<div class="t" style="left:389px;top:444px;font-size:12px;color:#000;letter-spacing:-0.042px;">administrative tools, use the "Run</div>
<div class="t" style="left:389px;top:459px;font-size:12px;color:#000;">only specified Windows applications"</div>
<div class="t" style="left:389px;top:474px;font-size:12px;color:#000;letter-spacing:0.079px;">policy setting.</div>
<div class="t" style="left:601px;top:110px;font-size:12px;color:#000;">Setting</div>
<div class="t" style="left:896px;top:110px;width:200px;text-align:center;font-size:12px;color:#000;">State</div>
<div class="t" style="left:1046px;top:110px;width:200px;text-align:center;font-size:12px;color:#000;">Comment</div>
<div style="left:945px;top:106px;width:1px;height:24px;background:#e5e5e5;"></div>
<div style="left:1045px;top:106px;width:1px;height:24px;background:#e5e5e5;"></div>
<div style="left:1245px;top:106px;width:1px;height:24px;background:#e5e5e5;"></div>
<div style="left:616px;top:491px;width:630px;height:19px;background:#0000dc;"></div>
<svg style="position:absolute;left:600px;top:132px" width="14" height="13"><use href="#folder"/></svg>
<div class="t" style="left:618px;top:132px;font-size:12px;color:#000;letter-spacing:0.137px;">Ctrl+Alt+Del Options</div>
<svg style="position:absolute;left:600px;top:151px" width="14" height="13"><use href="#folder"/></svg>
<div class="t" style="left:618px;top:151px;font-size:12px;color:#000;letter-spacing:-0.217px;">Display</div>
<svg style="position:absolute;left:600px;top:170px" width="14" height="13"><use href="#folder"/></svg>
<div class="t" style="left:618px;top:170px;font-size:12px;color:#000;letter-spacing:-0.044px;">Driver Installation</div>
<svg style="position:absolute;left:600px;top:189px" width="14" height="13"><use href="#folder"/></svg>
<div class="t" style="left:618px;top:189px;font-size:12px;color:#000;letter-spacing:-0.100px;">Folder Redirection</div>
<svg style="position:absolute;left:600px;top:208px" width="14" height="13"><use href="#folder"/></svg>
<div class="t" style="left:618px;top:208px;font-size:12px;color:#000;letter-spacing:-0.073px;">Group Policy</div>
<svg style="position:absolute;left:600px;top:227px" width="14" height="13"><use href="#folder"/></svg>
<div class="t" style="left:618px;top:227px;font-size:12px;color:#000;letter-spacing:0.131px;">Internet Communication Management</div>
<svg style="position:absolute;left:600px;top:246px" width="14" height="13"><use href="#folder"/></svg>
<div class="t" style="left:618px;top:246px;font-size:12px;color:#000;letter-spacing:-0.421px;">Locale Services</div>
<svg style="position:absolute;left:600px;top:265px" width="14" height="13"><use href="#folder"/></svg>
<div class="t" style="left:618px;top:265px;font-size:12px;color:#000;letter-spacing:0.125px;">Logon</div>
<svg style="position:absolute;left:600px;top:284px" width="14" height="13"><use href="#folder"/></svg>
<div class="t" style="left:618px;top:284px;font-size:12px;color:#000;letter-spacing:0.265px;">Mitigation Options</div>
<svg style="position:absolute;left:600px;top:303px" width="14" height="13"><use href="#folder"/></svg>
<div class="t" style="left:618px;top:303px;font-size:12px;color:#000;letter-spacing:-0.033px;">Power Management</div>
<svg style="position:absolute;left:600px;top:322px" width="14" height="13"><use href="#folder"/></svg>
<div class="t" style="left:618px;top:322px;font-size:12px;color:#000;letter-spacing:-0.278px;">Removable Storage Access</div>
<svg style="position:absolute;left:600px;top:341px" width="14" height="13"><use href="#folder"/></svg>
<div class="t" style="left:618px;top:341px;font-size:12px;color:#000;letter-spacing:-0.250px;">Scripts</div>
<svg style="position:absolute;left:600px;top:360px" width="14" height="13"><use href="#folder"/></svg>
<div class="t" style="left:618px;top:360px;font-size:12px;color:#000;letter-spacing:-0.292px;">User Profiles</div>
<svg style="position:absolute;left:601px;top:379px" width="13" height="15"><use href="#page"/></svg>
<div class="t" style="left:618px;top:379px;font-size:12px;color:#000;letter-spacing:0.050px;">Download missing COM components</div>
<div class="t" style="left:895px;top:379px;width:200px;text-align:center;font-size:12px;color:#000;letter-spacing:0.25px">Not configured</div>
<div class="t" style="left:1046px;top:379px;width:200px;text-align:center;font-size:12px;color:#000;">No</div>
<svg style="position:absolute;left:601px;top:398px" width="13" height="15"><use href="#page"/></svg>
<div class="t" style="left:618px;top:398px;font-size:12px;color:#000;letter-spacing:-0.086px;">Century interpretation for Year 2000</div>
<div class="t" style="left:895px;top:398px;width:200px;text-align:center;font-size:12px;color:#000;letter-spacing:0.25px">Not configured</div>
<div class="t" style="left:1046px;top:398px;width:200px;text-align:center;font-size:12px;color:#000;">No</div>
<svg style="position:absolute;left:601px;top:417px" width="13" height="15"><use href="#page"/></svg>
<div class="t" style="left:618px;top:417px;font-size:12px;color:#000;">Restrict these programs from being launched from Help</div>
<div class="t" style="left:895px;top:417px;width:200px;text-align:center;font-size:12px;color:#000;letter-spacing:0.25px">Not configured</div>
<div class="t" style="left:1046px;top:417px;width:200px;text-align:center;font-size:12px;color:#000;">No</div>
<svg style="position:absolute;left:601px;top:436px" width="13" height="15"><use href="#page"/></svg>
<div class="t" style="left:618px;top:436px;font-size:12px;color:#000;letter-spacing:-0.065px;">Do not display the Getting Started welcome screen at logon</div>
<div class="t" style="left:895px;top:436px;width:200px;text-align:center;font-size:12px;color:#000;letter-spacing:0.25px">Not configured</div>
<div class="t" style="left:1046px;top:436px;width:200px;text-align:center;font-size:12px;color:#000;">No</div>
<svg style="position:absolute;left:601px;top:455px" width="13" height="15"><use href="#page"/></svg>
<div class="t" style="left:618px;top:455px;font-size:12px;color:#000;letter-spacing:-0.120px;">Custom User Interface</div>
<div class="t" style="left:895px;top:455px;width:200px;text-align:center;font-size:12px;color:#000;letter-spacing:0.25px">Not configured</div>
<div class="t" style="left:1046px;top:455px;width:200px;text-align:center;font-size:12px;color:#000;">No</div>
<svg style="position:absolute;left:601px;top:474px" width="13" height="15"><use href="#page"/></svg>
<div class="t" style="left:618px;top:474px;font-size:12px;color:#000;">Prevent access to the command prompt</div>
<div class="t" style="left:895px;top:474px;width:200px;text-align:center;font-size:12px;color:#000;letter-spacing:0.25px">Not configured</div>
<div class="t" style="left:1046px;top:474px;width:200px;text-align:center;font-size:12px;color:#000;">No</div>
<svg style="position:absolute;left:601px;top:493px" width="13" height="15"><use href="#page"/></svg>
<div class="t" style="left:618px;top:493px;font-size:12px;color:#ffff00;letter-spacing:-0.095px;">Prevent access to registry editing tools</div>
<div class="t" style="left:896px;top:493px;width:200px;text-align:center;font-size:12px;color:#ffff00;letter-spacing:-0.2px">Enabled</div>
<div class="t" style="left:1046px;top:493px;width:200px;text-align:center;font-size:12px;color:#ffff00;">No</div>
<svg style="position:absolute;left:601px;top:512px" width="13" height="15"><use href="#page"/></svg>
<div class="t" style="left:618px;top:512px;font-size:12px;color:#000;letter-spacing:0.033px;">Don&#x27;t run specified Windows applications</div>
<div class="t" style="left:895px;top:512px;width:200px;text-align:center;font-size:12px;color:#000;letter-spacing:0.25px">Not configured</div>
<div class="t" style="left:1046px;top:512px;width:200px;text-align:center;font-size:12px;color:#000;">No</div>
<svg style="position:absolute;left:601px;top:531px" width="13" height="15"><use href="#page"/></svg>
<div class="t" style="left:618px;top:531px;font-size:12px;color:#000;letter-spacing:-0.026px;">Run only specified Windows applications</div>
<div class="t" style="left:895px;top:531px;width:200px;text-align:center;font-size:12px;color:#000;letter-spacing:0.25px">Not configured</div>
<div class="t" style="left:1046px;top:531px;width:200px;text-align:center;font-size:12px;color:#000;">No</div>
<svg style="position:absolute;left:601px;top:550px" width="13" height="15"><use href="#page"/></svg>
<div class="t" style="left:618px;top:550px;font-size:12px;color:#000;letter-spacing:0.050px;">Windows Automatic Updates</div>
<div class="t" style="left:895px;top:550px;width:200px;text-align:center;font-size:12px;color:#000;letter-spacing:0.25px">Not configured</div>
<div class="t" style="left:1046px;top:550px;width:200px;text-align:center;font-size:12px;color:#000;">No</div>
<div style="left:1360px;top:81px;width:1px;height:592px;background:#e3e3e3;"></div>
<div style="left:384px;top:672px;width:977px;height:1px;background:#e3e3e3;"></div>
<div style="left:382px;top:673px;width:980px;height:1px;background:#ffffff;"></div>
<div style="left:382px;top:674px;width:980px;height:19px;background:#f0f0f0;"></div>
<svg style="position:absolute;left:382px;top:672px" width="980" height="21" viewBox="0 0 980 21"><path d="M0 1V2L9 20.5H64L69 9L72 2H1Z" fill="#fff"/><path d="M0.5 2L9.5 20.5" stroke="#555" fill="none"/><path d="M64 20.5L68.5 10.5" stroke="#555" fill="none"/><path d="M72 2.5L68.5 10.5L73.5 20.5H126L133.5 2.5Z" fill="#f0f0f0" stroke="#555" stroke-linejoin="miter"/><path d="M72 2.5H980" stroke="#6a6a6a"/><path d="M9.5 20.5H126" stroke="#8a8a8a"/></svg>
<div class="t" style="left:393px;top:676px;font-size:12px;color:#000;">Extended</div>
<div class="t" style="left:457px;top:676px;font-size:12px;color:#000;">Standard</div>
<div style="left:4px;top:693px;width:1358px;height:23px;background:#f0f0f0;"></div>
<div style="left:4px;top:693px;width:1358px;height:1px;background:#d5d5d5;"></div>
<div style="left:1141px;top:695px;width:1px;height:20px;background:#cfcfcf;"></div>
<div style="left:1274px;top:695px;width:1px;height:20px;background:#cfcfcf;"></div>
<div style="left:1359px;top:695px;width:1px;height:20px;background:#cfcfcf;"></div>
<div class="t" style="left:6px;top:698px;font-size:12px;color:#000;letter-spacing:-0.183px;">10 setting(s)</div>
<div style="left:0px;top:720px;width:1366px;height:48px;background:#1c1c1c;"></div>
<svg style="position:absolute;left:472px;top:733px" width="23" height="23"><use href="#winlogo"/></svg>
<div style="left:508px;top:728px;width:218px;height:30px;background:#3a3a3a;border:1px solid #454545;border-radius:16px"></div>
<svg style="position:absolute;left:519px;top:737px" width="16" height="16"><use href="#tk_search"/></svg>
<div class="t" style="left:544px;top:736px;font-size:13.5px;color:#cccccc">Search</div>
<svg style="position:absolute;left:739px;top:732px" width="26" height="24"><use href="#tk_taskview"/></svg>
<svg style="position:absolute;left:783px;top:732px" width="26" height="24"><use href="#tk_explorer"/></svg>
<svg style="position:absolute;left:827px;top:731px" width="26" height="26"><use href="#tk_edge"/></svg>
<div style="left:864px;top:724px;width:38px;height:38px;background:#2a2a2a;border:1px solid #303030;border-radius:6px"></div>
<svg style="position:absolute;left:872px;top:731px" width="24" height="24"><use href="#scroll_big"/></svg>
<div style="left:876px;top:760px;width:16px;height:3px;background:#4cc2ff;border-radius:2px"></div>
<svg style="position:absolute;left:1092px;top:739px" width="13" height="9"><use href="#tk_chev"/></svg>
<svg style="position:absolute;left:1121px;top:735px" width="20" height="19"><use href="#tk_sync"/></svg>
<svg style="position:absolute;left:1154px;top:737px" width="18" height="16"><use href="#tk_net"/></svg>
<svg style="position:absolute;left:1186px;top:735px" width="18" height="18"><use href="#tk_mon"/></svg>
<svg style="position:absolute;left:1210px;top:736px" width="18" height="16"><use href="#tk_vol"/></svg>
<svg style="position:absolute;left:1234px;top:735px" width="18" height="16"><use href="#tk_bat"/></svg>
<div class="t" style="left:1222px;top:729px;width:101px;text-align:right;font-size:12px;color:#ffffff">1:23 PM</div>
<div class="t" style="left:1222px;top:745px;width:101px;text-align:right;font-size:12px;color:#ffffff;letter-spacing:0.25px;margin-right:-0.25px">1/24/2026</div>
<svg style="position:absolute;left:1330px;top:736px" width="16" height="17"><use href="#tk_bell"/></svg>
</body></html>
